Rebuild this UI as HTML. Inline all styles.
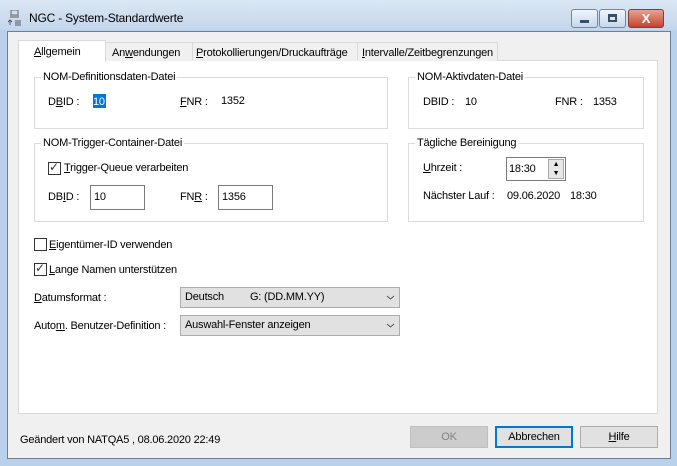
<!DOCTYPE html>
<html><head><meta charset="utf-8"><style>
*{margin:0;padding:0;box-sizing:border-box}
body{width:677px;height:466px;overflow:hidden;font-family:"Liberation Sans",sans-serif;font-size:11px;letter-spacing:-0.2px;color:#000;background:#b9d1ea;position:relative}
.a{position:absolute;white-space:nowrap}
.t{position:absolute;white-space:nowrap;line-height:14px}
u{text-decoration:underline}
.grp{position:absolute;border:1px solid #dcdcdc}
.leg{position:absolute;background:#fff;padding:0 2px;line-height:14px;top:-8px;left:6px}
.cb{position:absolute;width:13px;height:13px;border:1px solid #333;background:#fff}
.inp{position:absolute;border:1px solid #7a7a7a;background:#fff;padding:3px 3px;line-height:16px}
.combo{position:absolute;border:1px solid #adadad;background:#e1e1e1;padding:0 4px;line-height:19px}
.btn{position:absolute;border:1px solid #adadad;background:#e1e1e1;text-align:center;line-height:20px;height:22px;width:78px}
</style></head><body>
<div class="a" style="left:0;top:0;width:677px;height:30px;background:linear-gradient(#dbe7f4,#c3d6ec)"></div>
<svg class="a" style="left:8px;top:10px" width="14" height="16"><rect x="3" y="0" width="7" height="5" fill="none" stroke="#666"/><rect x="2" y="5" width="9" height="3" fill="#999"/><path d="M2 15V10M0 12l2-2 2 2M7 11h6M7 13h6M7 15h6" stroke="#556" fill="none"/></svg>
<div class="t" style="left:29px;top:11px;font-size:12px;letter-spacing:-0.2px">NGC - System-Standardwerte</div>
<div class="a" style="left:571px;top:9px;width:27px;height:19px;border:1px solid #6d87a8;border-radius:3px;background:linear-gradient(#f0f5fb,#c6d7ec)"><div class="a" style="left:8px;top:10px;width:9px;height:3px;background:#3a4c66"></div></div>
<div class="a" style="left:599px;top:9px;width:27px;height:19px;border:1px solid #6d87a8;border-radius:3px;background:linear-gradient(#f0f5fb,#c6d7ec)"><div class="a" style="left:8px;top:4px;width:9px;height:8px;border:2px solid #3a4c66;border-top-width:3px"></div></div>
<div class="a" style="left:628px;top:9px;width:36px;height:19px;border:1px solid #8a3a2e;border-radius:3px;background:linear-gradient(#e8a293,#c4432e);color:#fff;font-weight:bold;text-align:center;line-height:17px;font-size:13px">X</div>
<div class="a" style="left:7px;top:31px;width:664px;height:428px;background:#f0f0f0;border:1px solid #6e7f92"></div>
<div class="a" style="left:18px;top:60px;width:640px;height:354px;background:#fff;border:1px solid #d9d9d9"></div>
<div class="a" style="left:105px;top:42px;width:393px;height:19px;background:#f0f0f0;border:1px solid #d9d9d9;border-bottom:none"></div>
<div class="a" style="left:192px;top:42px;width:1px;height:18px;background:#d9d9d9"></div>
<div class="a" style="left:357px;top:42px;width:1px;height:18px;background:#d9d9d9"></div>
<div class="a" style="left:18px;top:40px;width:88px;height:22px;background:#fff;border:1px solid #d9d9d9;border-bottom:none"></div>
<div class="t" style="left:34px;top:45px"><u>A</u>llgemein</div>
<div class="t" style="left:112px;top:46px">An<u>w</u>endungen</div>
<div class="t" style="left:196px;top:46px"><u>P</u>rotokollierungen/Druckaufträge</div>
<div class="t" style="left:362px;top:46px"><u>I</u>ntervalle/Zeitbegrenzungen</div>

<div class="grp" style="left:34px;top:77px;width:354px;height:52px"><div class="leg">NOM-Definitionsdaten-Datei</div></div>
<div class="t" style="left:48px;top:95px">D<u>B</u>ID :</div>
<div class="a" style="left:93px;top:94px;width:13px;height:14px;background:#0078d7"></div>
<div class="t" style="left:93px;top:95px;color:#fff">10</div>
<div class="t" style="left:180px;top:95px"><u>F</u>NR :</div>
<div class="t" style="left:221px;top:94px">1352</div>

<div class="grp" style="left:34px;top:143px;width:354px;height:79px"><div class="leg">NOM-Trigger-Container-Datei</div></div>
<div class="cb" style="left:48px;top:162px"></div>
<div class="t" style="left:49px;top:160px;color:#333;font-size:12px">✓</div>
<div class="t" style="left:64px;top:161px"><u>T</u>rigger-Queue verarbeiten</div>
<div class="t" style="left:48px;top:190px">DB<u>I</u>D :</div>
<div class="inp" style="left:90px;top:185px;width:55px;height:25px">10</div>
<div class="t" style="left:180px;top:190px">FN<u>R</u> :</div>
<div class="inp" style="left:218px;top:185px;width:55px;height:25px">1356</div>

<div class="grp" style="left:408px;top:77px;width:236px;height:52px"><div class="leg">NOM-Aktivdaten-Datei</div></div>
<div class="t" style="left:423px;top:95px">DBID :</div>
<div class="t" style="left:465px;top:95px">10</div>
<div class="t" style="left:555px;top:95px">FNR :</div>
<div class="t" style="left:593px;top:95px">1353</div>

<div class="grp" style="left:408px;top:143px;width:236px;height:79px"><div class="leg">Tägliche Bereinigung</div></div>
<div class="t" style="left:423px;top:161px"><u>U</u>hrzeit :</div>
<div class="inp" style="left:506px;top:157px;width:60px;height:24px;padding:3px 2px">18:30</div>
<div class="a" style="left:548px;top:159px;width:16px;height:20px;background:#e8e8e8;border:1px solid #aaa;font-size:7px;line-height:9px;text-align:center">▲<br>▼</div>
<div class="t" style="left:423px;top:189px">Nächster Lauf :</div>
<div class="t" style="left:507px;top:189px">09.06.2020</div>
<div class="t" style="left:570px;top:189px">18:30</div>

<div class="cb" style="left:34px;top:238px"></div>
<div class="t" style="left:49px;top:238px"><u>E</u>igentümer-ID verwenden</div>
<div class="cb" style="left:34px;top:263px"></div>
<div class="t" style="left:35px;top:261px;color:#333;font-size:12px">✓</div>
<div class="t" style="left:49px;top:263px"><u>L</u>ange Namen unterstützen</div>

<div class="t" style="left:34px;top:291px"><u>D</u>atumsformat :</div>
<div class="combo" style="left:180px;top:287px;width:220px;height:21px">Deutsch<span style="margin-left:26px">G: (DD.MM.YY)</span></div>
<div class="t" style="left:34px;top:319px">Auto<u>m</u>. Benutzer-Definition :</div>
<div class="combo" style="left:180px;top:315px;width:220px;height:21px">Auswahl-Fenster anzeigen</div>
<svg class="a" style="left:386px;top:295px" width="9" height="36"><path d="M1 1l3.5 3 3.5-3M1 29l3.5 3 3.5-3" stroke="#555" fill="none"/></svg>

<div class="t" style="left:20px;top:433px">Geändert von NATQA5 , 08.06.2020 22:49</div>
<div class="btn" style="left:410px;top:426px;background:#cccccc;border-color:#bfbfbf;color:#838383">OK</div>
<div class="btn" style="left:495px;top:426px;border:2px solid #0078d7;line-height:18px">Abbrechen</div>
<div class="btn" style="left:580px;top:426px"><u>H</u>ilfe</div>
</body></html>
